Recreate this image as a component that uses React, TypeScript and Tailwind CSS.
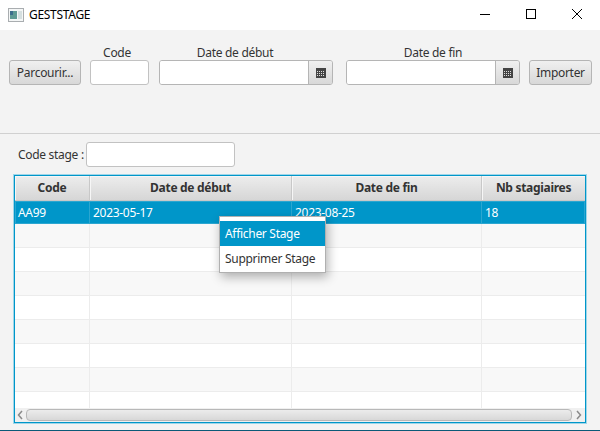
import React from "react";

const btn =
  "h-[25px] rounded-[3px] border border-[#b5b5b5] bg-gradient-to-b from-[#f0f0f0] to-[#d8d8d8] text-[12px] text-[#333333] flex items-center justify-center whitespace-nowrap";
const input = "h-[25px] rounded-[3px] border border-[#c2c2c2] bg-white";
const label = "text-[12px] leading-[18px] h-[16px] text-[#333333] whitespace-nowrap";

const CalendarIcon = () => (
  <svg width="10" height="10" viewBox="0 0 10 10">
    <rect width="10" height="10" fill="#444444" />
    <g fill="#dddddd">
      {[3, 5, 7].map((y) =>
        [1, 3, 5, 7].map((x) => <rect key={`${x}-${y}`} x={x} y={y} width="1" height="1" />)
      )}
    </g>
  </svg>
);

const DateField = ({ text, labelPad }: { text: string; labelPad: string }) => (
  <div className="flex flex-col items-center w-[174px]">
    <span className={`${label} ${labelPad}`}>{text}</span>
    <div className="flex w-full h-[25px] rounded-[3px] border border-[#b5b5b5] overflow-hidden">
      <div className="flex-1 bg-white" />
      <div className="w-[24px] border-l border-[#b5b5b5] bg-gradient-to-b from-[#f0f0f0] to-[#d8d8d8] flex items-center justify-center">
        <CalendarIcon />
      </div>
    </div>
  </div>
);

const columns = ["w-[75px]", "w-[202px]", "w-[190px]", "flex-1"];
const headers = ["Code", "Date de début", "Date de fin", "Nb stagiaires"];
const values = ["AA99", "2023-05-17", "2023-08-25", "18"];

const EmptyRow = ({ odd }: { odd: boolean }) => (
  <div className={`flex h-[24px] border-b border-[#ececec] ${odd ? "bg-[#f8f8f8]" : "bg-white"}`}>
    {columns.map((c) => (
      <div key={c} className={`${c} border-r border-[#ececec] last:border-r-0`} />
    ))}
  </div>
);

export default function App() {
  return (
    <div className="w-[600px] h-[431px] flex flex-col bg-[#f3f3f3] overflow-hidden relative tracking-[-0.3px] font-['Noto_Sans','Open_Sans',sans-serif]">
      {/* title bar */}
      <div className="h-[30px] bg-white flex items-center shrink-0">
        <svg className="ml-[8px]" width="16" height="14" viewBox="0 0 16 14">
          <rect x="0.5" y="0.5" width="15" height="13" fill="#f4f6f6" stroke="#a9adb0" />
          <rect x="2" y="3" width="7" height="8" fill="#5f9a94" />
          <rect x="2" y="3" width="3" height="4" fill="#3c6d8c" />
          <rect x="10" y="3" width="4" height="8" fill="#d5dfe0" />
        </svg>
        <span className="ml-[5px] text-[12px] text-black">GESTSTAGE</span>
        <div className="ml-auto flex items-center">
          <svg width="46" height="30" viewBox="0 0 46 30">
            <rect x="18" y="14" width="10" height="1" fill="#000" />
          </svg>
          <svg width="46" height="30" viewBox="0 0 46 30">
            <rect x="18.5" y="9.5" width="9" height="9" fill="none" stroke="#000" />
          </svg>
          <svg width="46" height="30" viewBox="0 0 46 30">
            <path d="M18 9 L28 19 M28 9 L18 19" stroke="#000" fill="none" />
          </svg>
        </div>
      </div>

      {/* import toolbar */}
      <div className="h-[104px] shrink-0 border-b border-[#d0d0d0] flex items-start pt-[14px] pl-[9px] gap-[9px]">
        <div className={`${btn} w-[72px] mt-[16px]`}>Parcourir...</div>
        <div className="flex flex-col items-center w-[59px]">
          <span className={`${label} pr-[5px]`}>Code</span>
          <div className={`${input} w-full`} />
        </div>
        <div className="ml-px flex gap-[13px]">
          <DateField text="Date de début" labelPad="pr-[22px]" />
          <DateField text="Date de fin" labelPad="" />
        </div>
        <div className={`${btn} w-[63px] mt-[16px]`}>Importer</div>
      </div>

      {/* filter */}
      <div className="flex items-center h-[25px] mt-[8px] ml-[18px] shrink-0">
        <span className="text-[12px] text-[#333333] w-[68px] whitespace-nowrap">Code stage :</span>
        <div className={`${input} w-[149px]`} />
      </div>

      {/* table */}
      <div className="mx-[14px] mt-[8px] w-[572px] h-[248px] border border-[#0096c9] shadow-[0_0_0_1px_#9fd6e9,inset_1px_0_0_#4fb6da,inset_-1px_0_0_#4fb6da] flex flex-col shrink-0 relative">
        <div className="flex h-[25px] shrink-0 bg-gradient-to-b from-[#ededed] to-[#d6d6d6] border-b border-[#c8c8c8]">
          {headers.map((h, i) => (
            <div
              key={h}
              className={`${columns[i]} flex items-center justify-center text-[12px] font-bold text-[#333333] border-r border-[#c8c8c8] last:border-r-0 shadow-[inset_1px_1px_0_#f6f6f6]`}
            >
              {h}
            </div>
          ))}
        </div>
        <div className="flex-1 overflow-hidden">
          <div className="flex h-[23px] bg-[#0096c9] shadow-[inset_0_0_0_1px_#2ba6d0]">
            {values.map((v, i) => (
              <div
                key={v}
                className={`${columns[i]} flex items-center pl-[3px] text-[12px] text-white border-r border-[#2ba6d0] last:border-r-0`}
              >
                {v}
              </div>
            ))}
          </div>
          {[true, false, true, false, true, false, true, false].map((odd, i) => (
            <EmptyRow key={i} odd={odd} />
          ))}
        </div>
        {/* scrollbar */}
        <div className="h-[14px] shrink-0 bg-[#f0f0f0] flex items-center">
          <svg width="11" height="12" viewBox="0 0 11 12" className="shrink-0">
            <path d="M7 2 L3.5 6 L7 10" stroke="#8a8a8a" strokeWidth="1.5" fill="none" />
          </svg>
          <div className="flex-1 h-[12px] rounded-[4px] border border-[#b8b8b8] bg-gradient-to-b from-[#ececec] to-[#d8d8d8]" />
          <svg width="13" height="12" viewBox="0 0 13 12" className="shrink-0">
            <path d="M5 2 L8.5 6 L5 10" stroke="#8a8a8a" strokeWidth="1.5" fill="none" />
          </svg>
        </div>
      </div>

      {/* context menu */}
      <div className="absolute left-[219px] top-[216px] w-[107px] h-[57px] bg-white border border-[#b0b0b0] shadow-[2px_4px_10px_rgba(0,0,0,0.3)] pt-[4px]">
        <div className="h-[25px] bg-[#0096c9] text-white text-[12px] flex items-center pl-[5px]">
          Afficher Stage
        </div>
        <div className="h-[25px] text-[#333333] text-[12px] flex items-center pl-[5px]">
          Supprimer Stage
        </div>
      </div>

      <div className="absolute left-0 right-0 bottom-0 h-px bg-[#0b5a78]" />
    </div>
  );
}
